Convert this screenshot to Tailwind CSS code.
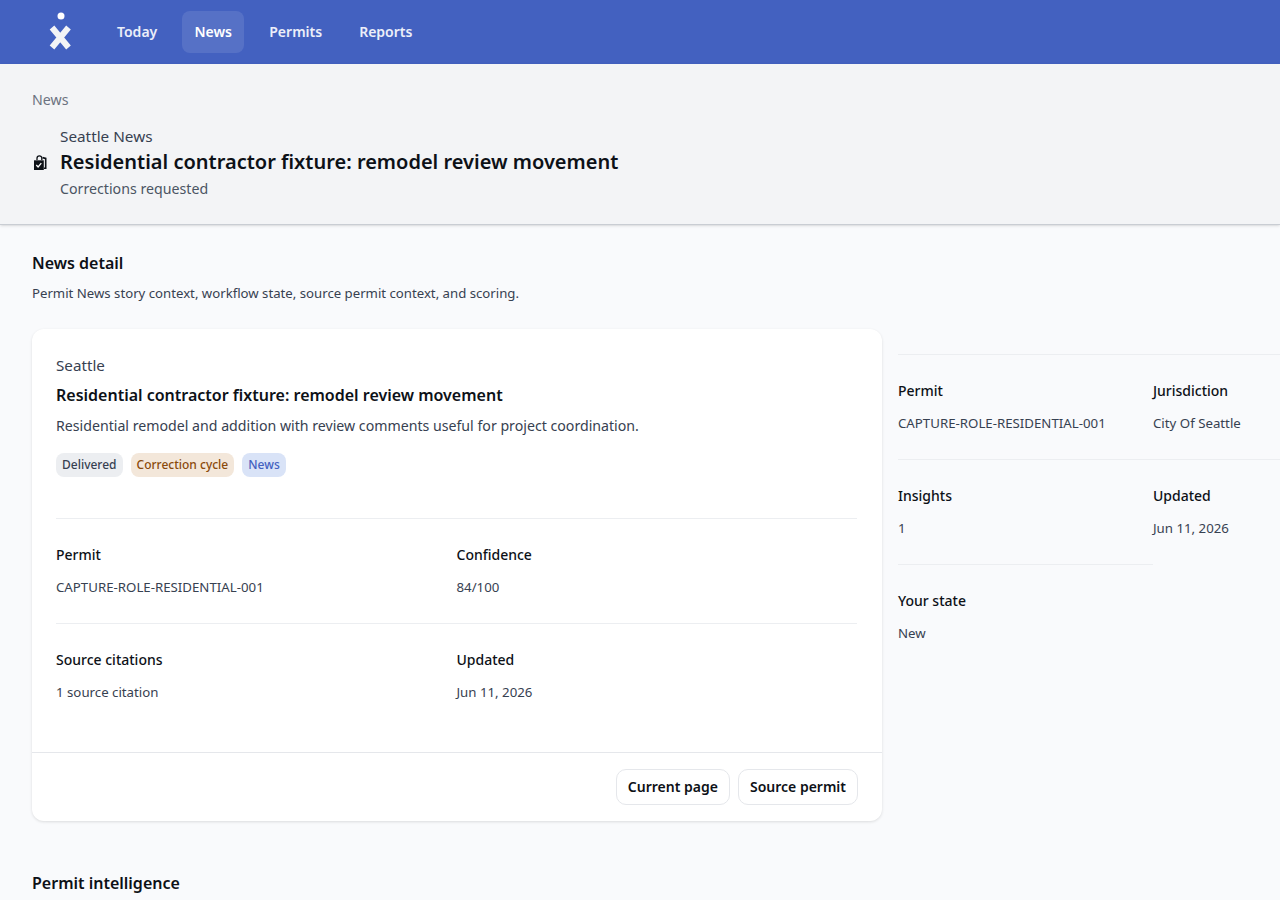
<!DOCTYPE html>
<html>
<head>
<meta charset="utf-8">
<script src="https://cdn.jsdelivr.net/npm/@tailwindcss/browser@4"></script>
</head>
<body class="bg-[#f9fafc] font-['Noto_Sans',sans-serif] text-[#0d1117] overflow-hidden">
<div class="h-[900px] overflow-hidden">
<header class="h-16 bg-[#4361c0] flex items-center pl-[48px] text-sm font-semibold text-white/90">
  <svg class="w-6 h-[38px] mt-[-2px]" viewBox="0 0 24 38" fill="none">
    <circle cx="13" cy="4" r="3.5" fill="#fff"/>
    <path d="M4 15.5 L20.5 35.5 M20.5 15.5 L4 35.5" stroke="#f3f4f6" stroke-width="6"/>
  </svg>
  <nav class="flex items-center gap-[12px] ml-[33px]">
    <a class="pl-[12px] pr-[13px] h-[42px] flex items-center rounded-lg">Today</a>
    <a class="w-[62px] justify-center h-[42px] flex items-center rounded-lg bg-white/10 text-white">News</a>
    <a class="px-[13px] h-[42px] flex items-center rounded-lg">Permits</a>
    <a class="px-[12px] h-[42px] flex items-center rounded-lg">Reports</a>
  </nav>
</header>
<section class="h-[161px] bg-[#f3f4f6] border-b border-[#c9cdd3] px-8 pt-[26px] shadow-sm">
  <div class="text-[14.2px] leading-5 text-[#6b7280]">News</div>
  <div class="flex items-center mt-[14px]">
    <svg class="w-[16px] h-[16px] mr-[12px] mt-[3px]" viewBox="0 0 16 16" fill="none">
      <path d="M5 5V3.2a2.4 2.4 0 0 1 4.8 0V5" stroke="#0d1117" stroke-width="1.3"/>
      <path d="M10.5 2.6 L13.7 3.4 V13.2 H12" stroke="#0d1117" stroke-width="1.6"/>
      <path d="M2 5.3h9.8V15H2z" fill="#0d1117"/>
      <path d="M4.3 10l1.8 2 3.2-3.8" stroke="#fff" stroke-width="1.3"/>
    </svg>
    <div>
      <div class="text-[15.3px] leading-6 text-[#374151]">Seattle News</div>
      <h1 class="text-xl leading-7 font-semibold">Residential contractor fixture: remodel review movement</h1>
      <div class="text-[14.2px] leading-5 text-[#4b5563] mt-[3px]">Corrections requested</div>
    </div>
  </div>
</section>
<main class="px-8 pt-[26px]">
  <h2 class="text-base leading-6 font-semibold">News detail</h2>
  <p class="text-[13.2px] leading-5 text-[#374151] mt-[8px]">Permit News story context, workflow state, source permit context, and scoring.</p>
  <div class="flex gap-4 mt-[26px] w-[1400px]">
    <article class="w-[850px] h-[492px] bg-white rounded-xl shadow-[0_1px_3px_rgba(0,0,0,0.12)] flex flex-col">
      <div class="px-6 pt-[26px] flex-1">
        <div class="text-[15.2px] leading-5 text-[#374151]">Seattle</div>
        <h3 class="text-base leading-6 font-semibold mt-[8px]">Residential contractor fixture: remodel review movement</h3>
        <p class="text-[14.17px] leading-5 text-[#374151] mt-[9px]">Residential remodel and addition with review comments useful for project coordination.</p>
        <div class="flex gap-2 mt-[17px] text-xs font-medium">
          <span class="h-6 px-[6px] rounded-lg bg-[#eceef1] text-[#374151] flex items-center">Delivered</span>
          <span class="h-6 px-[6px] rounded-lg bg-[#f3e7da] text-[#8a4a0b] flex items-center">Correction cycle</span>
          <span class="h-6 px-[6px] rounded-lg bg-[#d9e3f7] text-[#4361c0] flex items-center">News</span>
        </div>
        <div class="mt-[41px] border-t border-[#eceef1] grid grid-cols-2 w-[801px] pt-[26px] text-[13.25px] leading-5 h-[105px]">
          <div><div class="text-sm font-medium">Permit</div><div class="mt-3 text-[#374151]">CAPTURE-ROLE-RESIDENTIAL-001</div></div>
          <div><div class="text-sm font-medium">Confidence</div><div class="mt-3 text-[#374151]">84/100</div></div>
        </div>
        <div class="border-t border-[#eceef1] grid grid-cols-2 w-[801px] pt-[26px] text-[13.25px] leading-5">
          <div><div class="text-sm font-medium">Source citations</div><div class="mt-3 text-[#374151]">1 source citation</div></div>
          <div><div class="text-sm font-medium">Updated</div><div class="mt-3 text-[#374151]">Jun 11, 2026</div></div>
        </div>
      </div>
      <div class="h-[69px] border-t border-[#e5e7eb] flex justify-end items-center gap-2 px-6 text-sm font-semibold">
        <button class="h-9 px-[11px] rounded-[10px] border border-[#e5e7eb] bg-white">Current page</button>
        <button class="h-9 px-[11px] rounded-[10px] border border-[#e5e7eb] bg-white">Source permit</button>
      </div>
    </article>
    <aside class="w-[400px] pt-[25px] text-[13.25px] leading-5">
      <div class="grid grid-cols-[255px_1fr] border-t border-[#eceef1] h-[105px] pt-[26px]">
        <div><div class="text-sm font-medium">Permit</div><div class="mt-3 text-[#374151]">CAPTURE-ROLE-RESIDENTIAL-001</div></div>
        <div><div class="text-sm font-medium">Jurisdiction</div><div class="mt-3 text-[#374151]">City Of Seattle</div></div>
      </div>
      <div class="grid grid-cols-[255px_1fr] border-t border-[#eceef1] h-[105px] pt-[26px]">
        <div><div class="text-sm font-medium">Insights</div><div class="mt-3 text-[#374151]">1</div></div>
        <div><div class="text-sm font-medium">Updated</div><div class="mt-3 text-[#374151]">Jun 11, 2026</div></div>
      </div>
      <div class="border-t border-[#eceef1] w-[255px] pt-[26px]">
        <div class="text-sm font-medium">Your state</div><div class="mt-3 text-[#374151]">New</div>
      </div>
    </aside>
  </div>
  <h2 class="text-base leading-6 font-semibold mt-[50px]">Permit intelligence</h2>
</main>
</div>
</body>
</html>
